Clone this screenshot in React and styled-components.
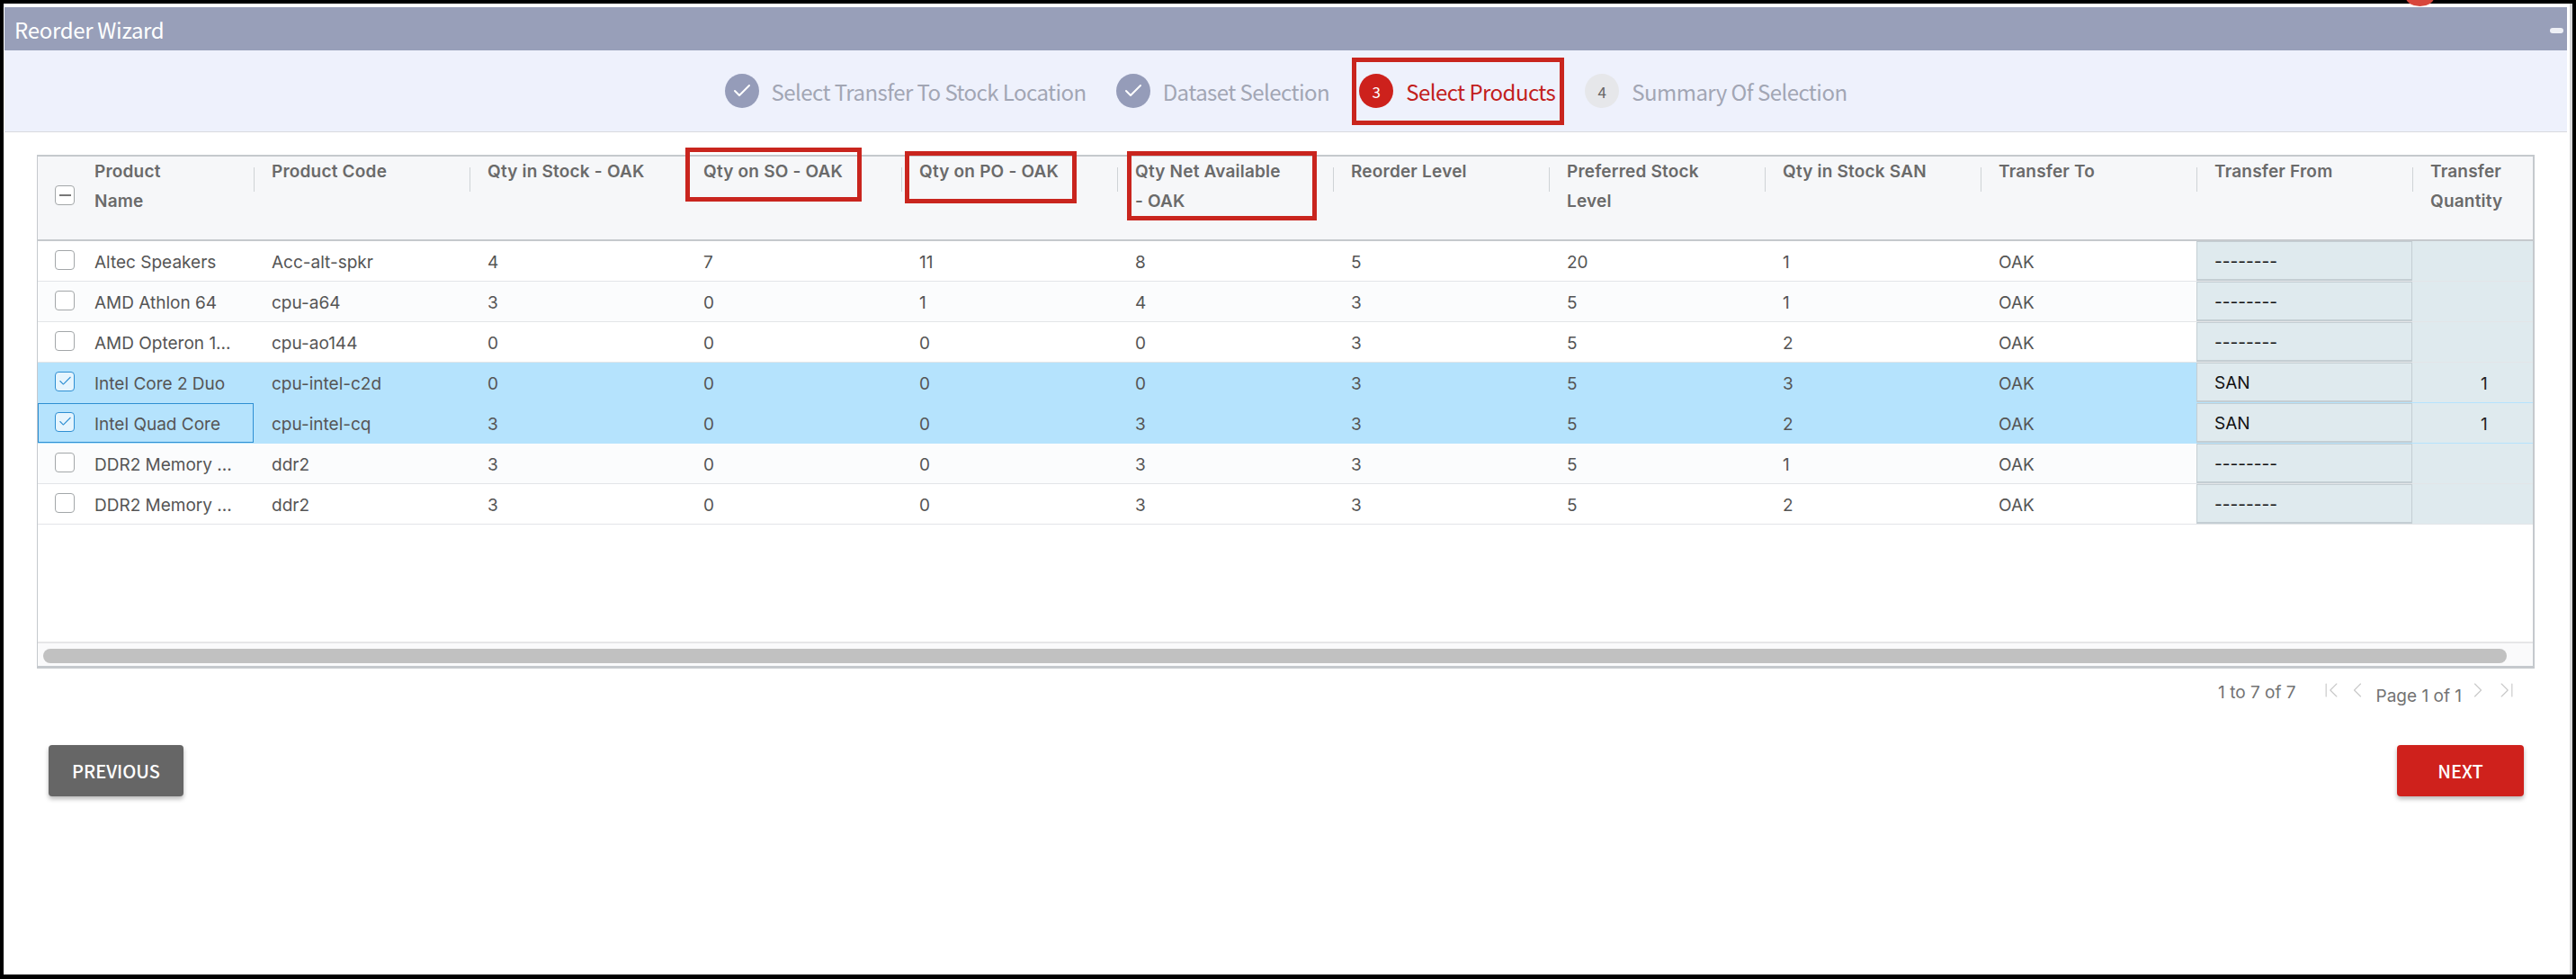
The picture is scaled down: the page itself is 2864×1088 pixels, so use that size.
import React from "react";
import styled, { createGlobalStyle } from "styled-components";
import { Check, ChevronFirst, ChevronLast, ChevronLeft, ChevronRight } from "lucide-react";

const Global = createGlobalStyle`
  html, body {
    margin: 0;
    padding: 0;
    background: #000;
  }
  * {
    box-sizing: border-box;
  }
`;

const CELL_FONT = `Inter, "Liberation Sans", sans-serif`;
const WIZARD_FONT = `"Noto Sans CJK SC", "Noto Sans", sans-serif`;

const columns = [
  "Product\nName",
  "Product Code",
  "Qty in Stock - OAK",
  "Qty on SO - OAK",
  "Qty on PO - OAK",
  "Qty Net Available\n- OAK",
  "Reorder Level",
  "Preferred Stock\nLevel",
  "Qty in Stock SAN",
  "Transfer To",
  "Transfer From",
  "Transfer\nQuantity",
];

const products = [
  { name: "Altec Speakers", code: "Acc-alt-spkr", qty: [4, 7, 11, 8, 5, 20, 1] },
  { name: "AMD Athlon 64", code: "cpu-a64", qty: [3, 0, 1, 4, 3, 5, 1] },
  { name: "AMD Opteron 1...", code: "cpu-ao144", qty: [0, 0, 0, 0, 3, 5, 2] },
  { name: "Intel Core 2 Duo", code: "cpu-intel-c2d", qty: [0, 0, 0, 0, 3, 5, 3], selected: true },
  { name: "Intel Quad Core", code: "cpu-intel-cq", qty: [3, 0, 0, 3, 3, 5, 2], selected: true, focused: true },
  { name: "DDR2 Memory ...", code: "ddr2", qty: [3, 0, 0, 3, 3, 5, 1] },
  { name: "DDR2 Memory ...", code: "ddr2", qty: [3, 0, 0, 3, 3, 5, 2] },
];

const steps = [
  { label: "Select Transfer To Stock Location", state: "done" },
  { label: "Dataset Selection", state: "done" },
  { label: "Select Products", state: "active", number: 3 },
  { label: "Summary Of Selection", state: "todo", number: 4 },
];

const callouts = [
  { left: 1503, top: 64, width: 236, height: 75 },
  { left: 762, top: 164, width: 196, height: 60 },
  { left: 1006, top: 168, width: 191, height: 58 },
  { left: 1253, top: 168, width: 211, height: 77 },
];

const Screen = styled.div`
  position: relative;
  width: 2864px;
  height: 1088px;
  padding: 4px 4px 5px 4px;
  overflow: hidden;
`;

const Sheet = styled.div`
  display: flex;
  flex-direction: column;
  height: 100%;
  padding: 4px 3px 0 1px;
  background: #fff;
  border-right: 3px solid #d8d8da;
`;

const NotificationDot = styled.span`
  position: absolute;
  left: 2675px;
  top: -12px;
  width: 31px;
  height: 19px;
  border-radius: 50%;
  background: #d8463c;
`;

const TitleBar = styled.header`
  display: flex;
  align-items: center;
  justify-content: space-between;
  flex: none;
  height: 48px;
  padding: 0 4px 0 11px;
  background: #989fb9;
  color: #fff;
  font: 400 24px ${WIZARD_FONT};
  letter-spacing: -0.3px;
`;

const Minimize = styled.span`
  width: 15px;
  height: 6px;
  margin-top: 4px;
  border-radius: 3px;
  background: #eef0f6;
`;

const Stepper = styled.nav`
  display: flex;
  align-items: center;
  justify-content: center;
  gap: 33px;
  flex: none;
  height: 91px;
  background: #eef1fc;
  border-bottom: 1px solid #d9dade;
`;

const Step = styled.div`
  display: flex;
  align-items: center;
  gap: 14px;
`;

const StepBadge = styled.span`
  display: flex;
  align-items: center;
  justify-content: center;
  width: 38px;
  height: 38px;
  border-radius: 50%;
  font: 400 17px ${WIZARD_FONT};
  background: ${(p) => (p.$state === "active" ? "#cd211c" : p.$state === "done" ? "#959cb9" : "#e6e7ea")};
  color: ${(p) => (p.$state === "todo" ? "#666" : "#fff")};
`;

const StepLabel = styled.span`
  font: 400 24px ${WIZARD_FONT};
  letter-spacing: -0.55px;
  color: ${(p) => (p.$state === "active" ? "#c2201c" : "#a2a6b4")};
`;

const Body = styled.main`
  display: flex;
  flex-direction: column;
  flex: 1;
  padding: 25px 36px 0 36px;
`;

const Grid = styled.section`
  display: flex;
  flex-direction: column;
  height: 571px;
  overflow: hidden;
  border-style: solid;
  border-color: #c5c9cd;
  border-width: 2px 2px 3px 1px;
  background: #fff;
`;

const Row = styled.div`
  display: grid;
  grid-template-columns: repeat(12, 240px);
  flex: none;
`;

const HeaderRow = styled(Row)`
  height: 94px;
  background: #f6f7f9;
  border-bottom: 2px solid #c5c9cd;
`;

const HeaderCell = styled.div`
  position: relative;
  display: flex;
  align-items: flex-start;
  gap: 22px;
  padding: 0 20px;
  font: 600 19px/33px ${CELL_FONT};
  letter-spacing: 0.2px;
  color: #6a6a6a;
  white-space: pre-line;

  &:not(:first-child)::before {
    content: "";
    position: absolute;
    left: 0;
    top: 12px;
    height: 27px;
    width: 1px;
    background: #cfd3d6;
  }
`;

const HeaderCheck = styled.div`
  align-self: flex-start;
  margin-top: 37px;
`;

const DataRow = styled(Row)`
  height: 45px;
  background: ${(p) => (p.$selected ? "#b5e3fd" : p.$odd ? "#fbfcfd" : "#fff")};
  border-bottom: 1px solid ${(p) => (p.$selected ? "#b5e3fd" : "#e3e5e8")};
`;

const Cell = styled.div`
  display: flex;
  align-items: center;
  gap: 22px;
  padding: 2px 20px 0;
  font: 400 19px ${CELL_FONT};
  color: #555;
  white-space: nowrap;
  box-shadow: ${(p) => (p.$focused ? "inset 0 0 0 1px #2e8fd3" : "none")};
`;

const LocationCell = styled(Cell)`
  padding: 2px 19px 0;
  color: #111;
  background: #dfeaee;
  border: 1px solid #c4ced3;
  border-bottom-width: 2px;
`;

const QuantityCell = styled(Cell)`
  padding-left: 76px;
  color: #222;
  background: #dfeaee;
`;

const Box = styled.span`
  display: flex;
  align-items: center;
  justify-content: center;
  flex: none;
  width: 22px;
  height: 22px;
  margin: -5px 0 0 -1px;
  border-radius: 4px;
  background: ${(p) => (p.$checked ? "#e6f5fe" : "#fff")};
  border: 1.5px solid ${(p) => (p.$checked ? "#2e8fd3" : "#a3a7a9")};
  color: #2e8fd3;
`;

const Dash = styled.span`
  width: 13px;
  height: 1.5px;
  background: #777;
`;

const ScrollSpace = styled.div`
  flex: 1;
`;

const ScrollTrack = styled.div`
  flex: none;
  height: 27px;
  padding: 6px 29px 4px 6px;
  background: #fafafb;
  border-top: 2px solid #e6e6e8;
`;

const ScrollThumb = styled.div`
  height: 16px;
  border-radius: 8px;
  background: #c1c1c1;
`;

const Pager = styled.div`
  display: flex;
  align-items: center;
  justify-content: flex-end;
  height: 50px;
  padding-right: 17px;
  font: 400 19px ${CELL_FONT};
  color: #737373;
`;

const PagerCount = styled.span`
  margin: 2px 25px 0 0;
`;

const PagerIcons = styled.span`
  display: flex;
  align-items: center;
  gap: ${(p) => (p.$end ? "4px" : "1px")};
  margin-bottom: 2px;
  color: #c9c9c9;
`;

const PageLabel = styled.span`
  margin: 10px 4px 0 7px;
`;

const Actions = styled.div`
  display: flex;
  justify-content: space-between;
  padding: 35px 12px 0 13px;
`;

const Button = styled.button`
  height: 57px;
  width: ${(p) => (p.$primary ? "141px" : "150px")};
  border: 0;
  border-radius: 4px;
  background: ${(p) => (p.$primary ? "#cf211c" : "#666")};
  color: #fff;
  font: 500 20px ${WIZARD_FONT};
  box-shadow: 0 3px 5px rgba(0, 0, 0, 0.28);
`;

const Callout = styled.div.attrs((p) => ({
  style: { left: p.$left, top: p.$top, width: p.$width, height: p.$height },
}))`
  position: absolute;
  border: 5px solid #c9251e;
`;

function Checkbox({ checked }) {
  return (
    <Box $checked={checked}>
      {checked && <Check size={17} strokeWidth={1.5} />}
    </Box>
  );
}

export default function App() {
  return (
    <Screen>
      <Global />
      <Sheet>
        <TitleBar>
          Reorder Wizard
          <Minimize />
        </TitleBar>
        <Stepper>
          {steps.map((s) => (
            <Step key={s.label}>
              <StepBadge $state={s.state}>
                {s.state === "done" ? <Check size={24} strokeWidth={2} /> : s.number}
              </StepBadge>
              <StepLabel $state={s.state}>{s.label}</StepLabel>
            </Step>
          ))}
        </Stepper>
        <Body>
          <Grid>
            <HeaderRow>
              {columns.map((c, i) => (
                <HeaderCell key={c}>
                  {i === 0 && (
                    <HeaderCheck>
                      <Box>
                        <Dash />
                      </Box>
                    </HeaderCheck>
                  )}
                  <span>{c}</span>
                </HeaderCell>
              ))}
            </HeaderRow>
            {products.map((p, i) => (
              <DataRow key={p.code + i} $selected={p.selected} $odd={i % 2 === 1}>
                <Cell $focused={p.focused}>
                  <Checkbox checked={p.selected} />
                  {p.name}
                </Cell>
                <Cell>{p.code}</Cell>
                {p.qty.map((q, j) => (
                  <Cell key={j}>{q}</Cell>
                ))}
                <Cell>OAK</Cell>
                <LocationCell>{p.selected ? "SAN" : "--------"}</LocationCell>
                <QuantityCell>{p.selected ? 1 : ""}</QuantityCell>
              </DataRow>
            ))}
            <ScrollSpace />
            <ScrollTrack>
              <ScrollThumb />
            </ScrollTrack>
          </Grid>
          <Pager>
            <PagerCount>1 to 7 of 7</PagerCount>
            <PagerIcons>
              <ChevronFirst size={28} strokeWidth={1} />
              <ChevronLeft size={28} strokeWidth={1} />
            </PagerIcons>
            <PageLabel>Page 1 of 1</PageLabel>
            <PagerIcons $end>
              <ChevronRight size={28} strokeWidth={1} />
              <ChevronLast size={28} strokeWidth={1} />
            </PagerIcons>
          </Pager>
          <Actions>
            <Button>PREVIOUS</Button>
            <Button $primary>NEXT</Button>
          </Actions>
        </Body>
      </Sheet>
      <NotificationDot />
      {callouts.map((c) => (
        <Callout key={c.left} $left={c.left} $top={c.top} $width={c.width} $height={c.height} />
      ))}
    </Screen>
  );
}
